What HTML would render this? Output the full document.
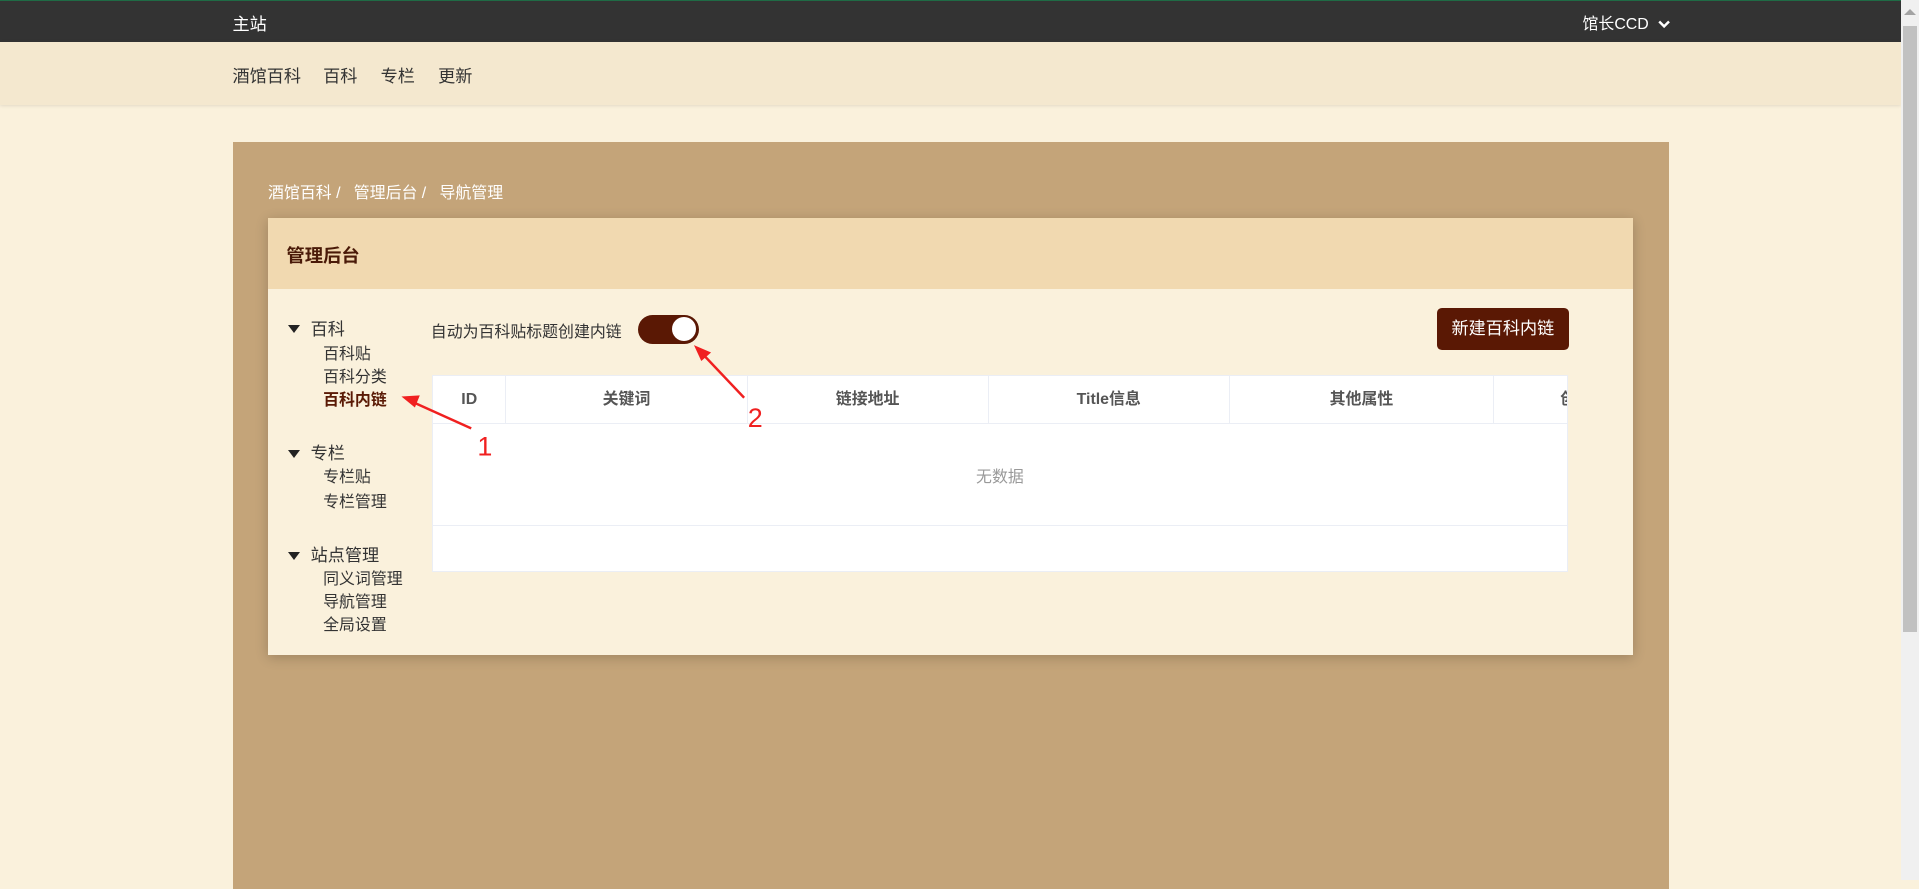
<!DOCTYPE html>
<html><head><meta charset="utf-8"><style>
html{zoom:1.2239}
body{margin:0;width:1568px;height:719px;overflow:hidden;background:#faf1dc;font-family:"Liberation Sans","Noto Sans CJK SC",sans-serif;position:relative;color:#333}
.a{position:absolute;white-space:nowrap}
.top{position:absolute;left:0;top:0;width:1553px;height:34px;background:#333;border-top:1px solid #1f6b45;box-sizing:border-box}
.sub{position:absolute;left:0;top:34px;width:1553px;height:52px;background:#f4e8cf;box-shadow:0 1px 3px rgba(0,0,0,.12)}
.panel{position:absolute;left:190px;top:116px;width:1174px;height:610px;background:#c4a479}
.card{position:absolute;left:219px;top:178px;width:1115px;height:357px;background:#faf1dc;box-shadow:0 2px 10px rgba(0,0,0,.2)}
.ch{position:absolute;left:0;top:0;width:100%;height:58px;background:#f1d9b0}
.tri{display:inline-block;width:0;height:0;border-left:5px solid transparent;border-right:5px solid transparent;border-top:7px solid #222;margin-right:9px;vertical-align:1px}
.s{font-size:13px;color:#333}
.th{position:absolute;top:0;height:39px;line-height:39px;text-align:center;font-size:13px;font-weight:bold;color:#555;border-right:1px solid #ebeef5;box-sizing:border-box}
</style></head><body>
<div class="top"></div>
<div class="a" style="left:190px;top:8px;color:#fff;font-size:14px">主站</div>
<div class="a" style="left:1293px;top:9px;color:#fff;font-size:13px">馆长CCD <svg width="10" height="8" style="margin-left:4px"><path d="M1 2 L5 6 L9 2" stroke="#fff" stroke-width="2" fill="none"/></svg></div>
<div class="sub"></div>
<div class="a" style="left:190px;top:51px;font-size:14px">酒馆百科</div>
<div class="a" style="left:264px;top:51px;font-size:14px">百科</div>
<div class="a" style="left:311px;top:51px;font-size:14px">专栏</div>
<div class="a" style="left:358px;top:51px;font-size:14px">更新</div>
<div style="position:absolute;left:1553px;top:0;width:15px;height:719px;background:#f0f0f0"></div>
<div style="position:absolute;left:1555px;top:21px;width:11px;height:495px;background:#c1c1c1"></div>
<div style="position:absolute;left:1556px;top:7px;width:0;height:0;border-left:5px solid transparent;border-right:5px solid transparent;border-bottom:5px solid #a3a3a3"></div>
<div class="panel"></div>
<div class="a" style="left:219px;top:147px;color:#fff;font-size:13px">酒馆百科 / &nbsp;&nbsp;管理后台 / &nbsp;&nbsp;导航管理</div>
<div class="card">
<div class="ch"></div>
<div class="a" style="left:15px;top:20px;font-size:15px;font-weight:bold;color:#4a1a08">管理后台</div>
<div class="a" style="left:16px;top:79px;font-size:14px"><span class="tri"></span>百科</div>
<div class="a s" style="left:45px;top:102px;line-height:19px">百科贴<br>百科分类<br><b style="color:#5a1a05">百科内链</b></div>
<div class="a" style="left:16px;top:181px;font-size:14px"><span class="tri"></span>专栏</div>
<div class="a s" style="left:45px;top:203px;line-height:20px">专栏贴<br>专栏管理</div>
<div class="a" style="left:16px;top:264px;font-size:14px"><span class="tri"></span>站点管理</div>
<div class="a s" style="left:45px;top:286px;line-height:19px">同义词管理<br>导航管理<br>全局设置</div>
<div class="a s" style="left:133px;top:83px">自动为百科贴标题创建内链</div>
<div class="a" style="left:302px;top:79px;width:50px;height:24px;border-radius:12px;background:#5a1804"></div>
<div class="a" style="left:330px;top:81px;width:20px;height:20px;border-radius:10px;background:#fff"></div>
<div class="a" style="left:955px;top:74px;width:108px;height:34px;border-radius:4px;background:#5a1804;color:#fff;font-size:14px;line-height:34px;text-align:center">新建百科内链</div>
<div class="a" style="left:134px;top:128px;width:928px;height:161px;background:#fff;border:1px solid #ebeef5;box-sizing:border-box;overflow:hidden">
<div class="th" style="left:0;width:60px">ID</div>
<div class="th" style="left:60px;width:197px">关键词</div>
<div class="th" style="left:257px;width:197px">链接地址</div>
<div class="th" style="left:454px;width:197px">Title信息</div>
<div class="th" style="left:651px;width:216px">其他属性</div>
<div class="th" style="left:867px;width:100px;text-align:left;padding-left:54px">创</div>
<div style="position:absolute;left:0;top:39px;width:100%;border-top:1px solid #ebeef5"></div>
<div style="position:absolute;left:0;top:72px;width:100%;text-align:center;font-size:13px;color:#999">无数据</div>
<div style="position:absolute;left:0;top:122px;width:100%;border-top:1px solid #ebeef5"></div>
</div>
</div>
<svg class="a" style="left:0;top:0" width="1568" height="719">
<path d="M385 350 L334 327" stroke="#f02020" stroke-width="2"/><path d="M328 324 L343 323 L339 333 Z" fill="#f02020"/>
<path d="M608 325 L572 287" stroke="#f02020" stroke-width="2"/><path d="M567 282 L581 288 L573 295 Z" fill="#f02020"/>
<text x="390" y="372" fill="#f02020" font-size="22" font-family="Liberation Sans">1</text>
<text x="611" y="349" fill="#f02020" font-size="22" font-family="Liberation Sans">2</text>
</svg>
</body></html>
